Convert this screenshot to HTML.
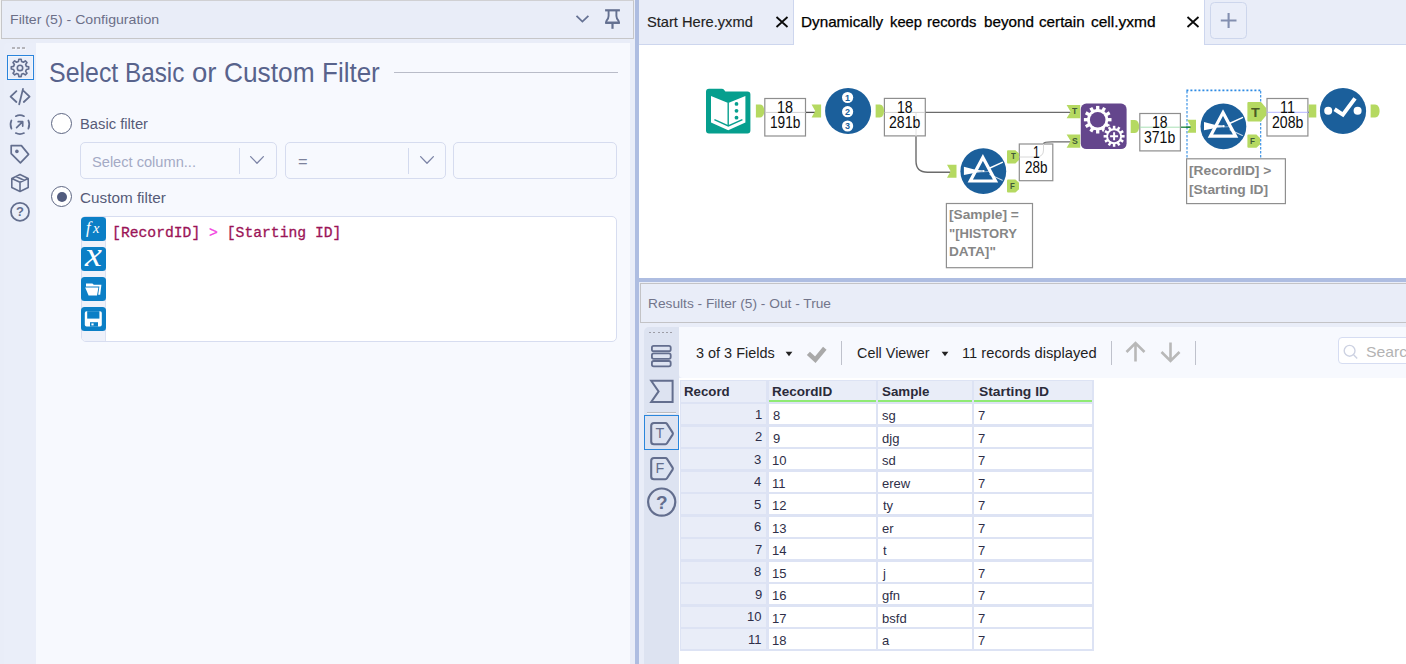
<!DOCTYPE html>
<html><head><meta charset="utf-8"><title>Alteryx Designer</title>
<style>
html,body{margin:0;padding:0;}
body{width:1406px;height:664px;overflow:hidden;background:#fff;font-family:"Liberation Sans",sans-serif;}
#root{position:relative;width:1406px;height:664px;overflow:hidden;background:#e9edf8;}
#root div,#root svg{position:absolute;box-sizing:border-box;}
.t{position:absolute;white-space:pre;line-height:1;transform-origin:0 0;display:block;}
.box{background:#fff;border:1px solid #8c8c8c;}
.anno{background:#fff;border:1px solid #8c8c8c;}
.dd{background:#f7f9fe;border:1px solid #d6dcef;border-radius:5px;}
.cell{background:#fff;}

</style></head>
<body>
<div id="root">
<div style="left:0;top:0;width:1.2px;height:40px;background:#f3f3f3"></div>
<div style="left:1.2px;top:-0.2px;width:632.5px;height:39.1px;background:#e9edf8;border:1.1px solid #c6c6c8;border-top-color:#d0d0d3"></div>
<div style="left:4px;top:43px;width:32px;height:621px;background:#eaeef9;border-radius:4px 0 0 0"></div>
<div style="left:36px;top:43px;width:594px;height:621px;background:#f7f9fe"></div>
<div style="left:393.5px;top:71.5px;width:224px;height:1px;background:#b9bcc8"></div>
<div style="left:51.3px;top:112.8px;width:21px;height:21px;border-radius:50%;border:1.5px solid #5d6682;background:#fff"></div>
<div style="left:51.3px;top:186.3px;width:21px;height:21px;border-radius:50%;border:1.5px solid #5d6682;background:#fff"></div>
<div style="left:56.6px;top:191.6px;width:10.4px;height:10.4px;border-radius:50%;background:#525c7e"></div>
<div class="dd" style="left:80px;top:142px;width:197.2px;height:36.6px"></div>
<div style="left:239px;top:147.5px;width:1px;height:26px;background:#d3daee"></div>
<div class="dd" style="left:285.2px;top:142px;width:160.8px;height:36.6px"></div>
<div style="left:407.5px;top:147.5px;width:1px;height:26px;background:#d3daee"></div>
<div class="dd" style="left:452.6px;top:142px;width:164.2px;height:36.6px"></div>
<svg style="left:249.3px;top:153px;width:16px;height:14px" viewBox="0 0 16 14"><path d="M1.6 3.6 L8 10.2 L14.4 3.6" fill="none" stroke="#7c84a6" stroke-width="1.3" stroke-linecap="round" stroke-linejoin="round"/></svg>
<svg style="left:419px;top:153px;width:16px;height:14px" viewBox="0 0 16 14"><path d="M1.6 3.6 L8 10.2 L14.4 3.6" fill="none" stroke="#7c84a6" stroke-width="1.3" stroke-linecap="round" stroke-linejoin="round"/></svg>
<div style="left:80.5px;top:215.7px;width:536.5px;height:126.5px;background:#fff;border:1px solid #d7ddf0;border-radius:5px"></div>
<div style="left:81.5px;top:216.7px;width:24.5px;height:124.5px;background:#eef1fa;border-radius:4px 0 0 4px;border-right:1px solid #dde2f2"></div>
<div style="left:81.3px;top:217px;width:25px;height:23.6px;background:#0b7fc6;border-radius:3.5px"></div>
<div style="left:81.3px;top:247px;width:25px;height:23.6px;background:#0b7fc6;border-radius:3.5px"></div>
<div style="left:81.3px;top:277px;width:25px;height:23.6px;background:#0b7fc6;border-radius:3.5px"></div>
<div style="left:81.3px;top:307px;width:25px;height:23.6px;background:#0b7fc6;border-radius:3.5px"></div>
<div style="left:635px;top:0;width:4px;height:664px;background:#aebde1"></div>
<div style="left:639px;top:0;width:767px;height:45px;background:#e9edf8;border-bottom:1px solid #cdd6ee"></div>
<div style="left:793px;top:0;width:411.8px;height:45px;background:#fff;border-left:1px solid #cdd6ee;border-right:1px solid #cdd6ee"></div>
<div style="left:1210.2px;top:2.2px;width:36.8px;height:36.5px;background:#eaeef9;border:1.2px solid #cdd6ec;border-radius:4.5px"></div>
<svg style="left:1218px;top:10px;width:22px;height:22px" viewBox="1218 10 22 22"><path d="M1228.6 12.9V28.1M1220.8 20.5H1236.5" stroke="#838fb0" stroke-width="2.1" fill="none"/></svg>
<svg style="left:775px;top:14.7px;width:14px;height:14px" viewBox="0 0 14 14"><path d="M1.5 2L12.5 12M12.5 2L1.5 12" stroke="#0a0a0a" stroke-width="1.8" fill="none"/></svg>
<svg style="left:1186.1px;top:14.7px;width:14px;height:14px" viewBox="0 0 14 14"><path d="M1.5 2L12.5 12M12.5 2L1.5 12" stroke="#0a0a0a" stroke-width="1.8" fill="none"/></svg>
<div style="left:639px;top:45px;width:767px;height:233px;background:#fff"></div>
<svg style="left:639px;top:45px;width:767px;height:233px" viewBox="639 45 767 233"><rect x="764.8" y="98.5" width="40.700000000000045" height="37.5" fill="#fff" stroke="#8e8e8e" stroke-width="1.2"/>
<rect x="884.4" y="98.4" width="40.89999999999998" height="37.5" fill="#fff" stroke="#8e8e8e" stroke-width="1.2"/>
<rect x="1019.3" y="144.0" width="33.5" height="36.69999999999999" fill="#fff" stroke="#8e8e8e" stroke-width="1.2"/>
<rect x="1139.8" y="113.5" width="40.600000000000136" height="37.400000000000006" fill="#fff" stroke="#8e8e8e" stroke-width="1.2"/>
<rect x="1267.0" y="98.5" width="40.90000000000009" height="37.5" fill="#fff" stroke="#8e8e8e" stroke-width="1.2"/>
<path d="M765 112.4H805.5" stroke="#cfcfcf" stroke-width="1"/>
<path d="M884.5 112.4H925" stroke="#cfcfcf" stroke-width="1"/>
<path d="M916 113V136" stroke="#e2e2e2" stroke-width="1"/>
<path d="M1019.5 157H1036Q1043.5 157 1043.5 150V144" stroke="#d8d8d8" stroke-width="1" fill="none"/>
<path d="M1140 127.2H1180.4" stroke="#a9dfb4" stroke-width="1"/>
<path d="M1267 112.3H1308" stroke="#b4b4ff" stroke-width="1"/>
<path d="M806 112.4H815.5" stroke="#4f4f4f" stroke-width="1.3"/>
<path d="M925.8 112.4H1070.6" stroke="#6b6b6b" stroke-width="1.4"/>
<path d="M916 136.5V161Q916 172.2 927.5 172.2H950.8" stroke="#6b6b6b" stroke-width="1.4" fill="none"/>
<path d="M1043.5 143.5Q1044 141.9 1052 141.9H1070.6" stroke="#6b6b6b" stroke-width="1.4" fill="none"/>
<path d="M1180.9 127.2H1191" stroke="#16843a" stroke-width="1.3"/>
<path d="M1308.4 112.3H1311.6" stroke="#1a1ac8" stroke-width="1.3"/>
<path d="M709 88.8H721.6Q723.4 88.8 724.4 90.2L725.4 91.6H747.4Q750.4 91.6 750.4 94.6V130.6Q750.4 133.6 747.4 133.6H709Q706 133.6 706 130.6V91.8Q706 88.8 709 88.8Z" fill="#069f8e"/>
<path d="M711 96L728.2 103L745.4 96V122.4L728.2 130.2L711 122.4Z" fill="#fff"/>
<path d="M728.2 102.5V126" stroke="#069f8e" stroke-width="1.4"/>
<path d="M714.4 119.6L728.3 125.9L742.4 119.6" stroke="#069f8e" stroke-width="1.4" fill="none"/>
<circle cx="736.5" cy="103.9" r="1.9" fill="#069f8e"/>
<circle cx="736.5" cy="110.8" r="1.9" fill="#069f8e"/>
<circle cx="736.5" cy="117.7" r="1.9" fill="#069f8e"/>
<path d="M755.9 104.5H760.10C762.62 104.5 764.30 107.36 764.30 111.00C764.30 114.64 762.62 117.5 760.10 117.5H755.9Z" fill="#b5d961"/>
<path d="M811.6 104.5H821.1V117.5H811.6L815.2 111.0Z" fill="#b5d961"/>
<circle cx="848.1" cy="111" r="23" fill="#1b5f9b"/>
<circle cx="847.6" cy="97.5" r="5.6" fill="#fff"/>
<text x="847.6" y="100.7" font-size="9" font-weight="700" text-anchor="middle" fill="#1b5f9b" font-family="Liberation Sans, sans-serif">1</text>
<circle cx="847.6" cy="111.7" r="5.6" fill="#fff"/>
<text x="847.6" y="114.9" font-size="9" font-weight="700" text-anchor="middle" fill="#1b5f9b" font-family="Liberation Sans, sans-serif">2</text>
<circle cx="847.6" cy="126.0" r="5.6" fill="#fff"/>
<text x="847.6" y="129.2" font-size="9" font-weight="700" text-anchor="middle" fill="#1b5f9b" font-family="Liberation Sans, sans-serif">3</text>
<path d="M875.6 104.5H879.80C882.32 104.5 884.00 107.36 884.00 111.00C884.00 114.64 882.32 117.5 879.80 117.5H875.6Z" fill="#b5d961"/>
<path d="M947 164.8H956.5V177.8H947L950.6 171.3Z" fill="#b5d961"/>
<circle cx="983.3" cy="171.2" r="22.9" fill="#1b5f9b"/><path d="M963.90 166.80L963.90 175.00L975.40 172.70L983.30 171.50L983.30 170.40L975.40 169.80Z" fill="#fff"/><path d="M989.40 168.30L1002.30 162.40" stroke="#fff" stroke-width="1.5" stroke-linecap="round"/><path d="M974.90 172.40L989.90 171.40" stroke="#8fb0cf" stroke-width="0.9"/><path d="M989.90 174.60L1002.30 180.20" stroke="#c5d7e8" stroke-width="1.1" stroke-linecap="round"/><path d="M982.90 157.40L995.50 181.00L970.30 181.00Z" fill="none" stroke="#fff" stroke-width="3.2" stroke-linejoin="miter"/><circle cx="983.50" cy="171.00" r="1.1" fill="#fff"/>
<path d="M1008 150.2H1015.4L1019 153.6V159.99999999999997L1015.4 163.39999999999998H1008Q1007 163.39999999999998 1007 162.39999999999998V151.2Q1007 150.2 1008 150.2Z" fill="#b5d961"/>
<path d="M1008 179.4H1015.4L1019 182.8V189.2L1015.4 192.6H1008Q1007 192.6 1007 191.6V180.4Q1007 179.4 1008 179.4Z" fill="#b5d961"/>
<path d="M1066.6 105.1H1080.1999999999998V118.3H1066.6L1070.6 111.69999999999999Z" fill="#b5d961"/>
<path d="M1066.6 134.5H1080.1999999999998V147.7H1066.6L1070.6 141.1Z" fill="#b5d961"/>
<rect x="1080.8" y="103.6" width="45.8" height="45.5" rx="5.5" fill="#64468c"/>
<circle cx="1097.7" cy="119.7" r="10.6" fill="#fff"/><rect x="1096.05" y="105.90" width="3.3" height="4.70" fill="#fff" transform="rotate(0.00 1097.7 119.7)"/><rect x="1096.05" y="105.90" width="3.3" height="4.70" fill="#fff" transform="rotate(30.00 1097.7 119.7)"/><rect x="1096.05" y="105.90" width="3.3" height="4.70" fill="#fff" transform="rotate(60.00 1097.7 119.7)"/><rect x="1096.05" y="105.90" width="3.3" height="4.70" fill="#fff" transform="rotate(90.00 1097.7 119.7)"/><rect x="1096.05" y="105.90" width="3.3" height="4.70" fill="#fff" transform="rotate(120.00 1097.7 119.7)"/><rect x="1096.05" y="105.90" width="3.3" height="4.70" fill="#fff" transform="rotate(150.00 1097.7 119.7)"/><rect x="1096.05" y="105.90" width="3.3" height="4.70" fill="#fff" transform="rotate(180.00 1097.7 119.7)"/><rect x="1096.05" y="105.90" width="3.3" height="4.70" fill="#fff" transform="rotate(210.00 1097.7 119.7)"/><rect x="1096.05" y="105.90" width="3.3" height="4.70" fill="#fff" transform="rotate(240.00 1097.7 119.7)"/><rect x="1096.05" y="105.90" width="3.3" height="4.70" fill="#fff" transform="rotate(270.00 1097.7 119.7)"/><rect x="1096.05" y="105.90" width="3.3" height="4.70" fill="#fff" transform="rotate(300.00 1097.7 119.7)"/><rect x="1096.05" y="105.90" width="3.3" height="4.70" fill="#fff" transform="rotate(330.00 1097.7 119.7)"/><circle cx="1097.7" cy="119.7" r="7.8" fill="#64468c"/>
<circle cx="1114.1" cy="136.3" r="11.6" fill="#64468c"/>
<circle cx="1114.1" cy="136.3" r="8.0" fill="#fff"/><rect x="1112.85" y="125.80" width="2.5" height="4.00" fill="#fff" transform="rotate(0.00 1114.1 136.3)"/><rect x="1112.85" y="125.80" width="2.5" height="4.00" fill="#fff" transform="rotate(30.00 1114.1 136.3)"/><rect x="1112.85" y="125.80" width="2.5" height="4.00" fill="#fff" transform="rotate(60.00 1114.1 136.3)"/><rect x="1112.85" y="125.80" width="2.5" height="4.00" fill="#fff" transform="rotate(90.00 1114.1 136.3)"/><rect x="1112.85" y="125.80" width="2.5" height="4.00" fill="#fff" transform="rotate(120.00 1114.1 136.3)"/><rect x="1112.85" y="125.80" width="2.5" height="4.00" fill="#fff" transform="rotate(150.00 1114.1 136.3)"/><rect x="1112.85" y="125.80" width="2.5" height="4.00" fill="#fff" transform="rotate(180.00 1114.1 136.3)"/><rect x="1112.85" y="125.80" width="2.5" height="4.00" fill="#fff" transform="rotate(210.00 1114.1 136.3)"/><rect x="1112.85" y="125.80" width="2.5" height="4.00" fill="#fff" transform="rotate(240.00 1114.1 136.3)"/><rect x="1112.85" y="125.80" width="2.5" height="4.00" fill="#fff" transform="rotate(270.00 1114.1 136.3)"/><rect x="1112.85" y="125.80" width="2.5" height="4.00" fill="#fff" transform="rotate(300.00 1114.1 136.3)"/><rect x="1112.85" y="125.80" width="2.5" height="4.00" fill="#fff" transform="rotate(330.00 1114.1 136.3)"/><circle cx="1114.1" cy="136.3" r="6.0" fill="#64468c"/>
<path d="M1114.1 132.3V140.3M1110.1 136.3H1118.1" stroke="#fff" stroke-width="2"/>
<path d="M1130.7 120H1134.90C1137.42 120 1139.10 122.86 1139.10 126.50C1139.10 130.14 1137.42 133 1134.90 133H1130.7Z" fill="#b5d961"/>
<path d="M1186.4 90.4H1261.2" fill="none" stroke="#2d8ae3" stroke-width="1.7" stroke-dasharray="2 2"/>
<path d="M1187 91V158.6M1260.7 91V158.6" fill="none" stroke="#2d8ae3" stroke-width="1.1" stroke-dasharray="2.6 1.4"/>
<path d="M1187.2 119.7H1196.0V132.7H1187.2L1190.8 126.2Z" fill="#b5d961"/>
<path d="M1186 127.2H1190.6" stroke="#16843a" stroke-width="1.3"/>
<circle cx="1223.4" cy="126.4" r="22.9" fill="#1b5f9b"/><path d="M1204.00 122.00L1204.00 130.20L1215.50 127.90L1223.40 126.70L1223.40 125.60L1215.50 125.00Z" fill="#fff"/><path d="M1229.50 123.50L1242.40 117.60" stroke="#fff" stroke-width="1.5" stroke-linecap="round"/><path d="M1215.00 127.60L1230.00 126.60" stroke="#8fb0cf" stroke-width="0.9"/><path d="M1230.00 129.80L1242.40 135.40" stroke="#c5d7e8" stroke-width="1.1" stroke-linecap="round"/><path d="M1223.00 112.60L1235.60 136.20L1210.40 136.20Z" fill="none" stroke="#fff" stroke-width="3.2" stroke-linejoin="miter"/><circle cx="1223.60" cy="126.20" r="1.1" fill="#fff"/>
<path d="M1248.4 102.1H1261L1266.2 108V115.6L1261 121.5H1248.4Q1247.4 121.5 1247.4 120.5V103.1Q1247.4 102.1 1248.4 102.1Z" fill="#b5d961"/>
<path d="M1248.4 134.6H1256.4L1260.0 138.0V144.39999999999998L1256.4 147.79999999999998H1248.4Q1247.4 147.79999999999998 1247.4 146.79999999999998V135.6Q1247.4 134.6 1248.4 134.6Z" fill="#b5d961"/>
<path d="M1308.7 104.5H1316.3V117.5H1308.7L1308.7 111.0Z" fill="#b5d961"/>
<circle cx="1343" cy="111" r="23.1" fill="#1b5f9b"/>
<circle cx="1328.2" cy="110.8" r="4" fill="#fff"/><circle cx="1357.6" cy="110.8" r="4" fill="#fff"/>
<path d="M1334.6 109.2L1342.9 114.6L1355.0 98.4" stroke="#fff" stroke-width="4" fill="none" stroke-linejoin="miter"/>
<path d="M1370.6 104.5H1375.10C1377.80 104.5 1379.60 107.36 1379.60 111.00C1379.60 114.64 1377.80 117.5 1375.10 117.5H1370.6Z" fill="#b5d961"/>
<rect x="946.4" y="203.5" width="86.1" height="64.2" fill="#fff" stroke="#8f8f8f" stroke-width="1.2"/>
<rect x="1186.6" y="158.8" width="98.8" height="44.8" fill="#fff" stroke="#8f8f8f" stroke-width="1.2"/></svg>
<div style="left:639px;top:278px;width:767px;height:4px;background:#aebde1"></div>
<div style="left:640px;top:282.5px;width:770px;height:40px;background:#e9edf8;border:1px solid #c3c3c6"></div>
<div style="left:644px;top:327px;width:35px;height:340px;background:#dde3f1;border-radius:5px 0 0 0"></div>
<div style="left:679px;top:327px;width:727px;height:51px;background:#f7f9fe;border-radius:0 0 0 4px"></div>
<div style="left:679px;top:378px;width:727px;height:286px;background:#fff"></div>
<div style="left:841.0px;top:340.5px;width:1px;height:24px;background:#bfc2cc"></div>
<div style="left:1110.8px;top:340.5px;width:1px;height:24px;background:#bfc2cc"></div>
<div style="left:1194.8px;top:340.5px;width:1px;height:24px;background:#bfc2cc"></div>
<svg style="left:785.3px;top:350.5px;width:8px;height:6px" viewBox="0 0 8 6"><path d="M0.6 0.8H7.4L4 5.2Z" fill="#222"/></svg>
<svg style="left:941px;top:350.5px;width:8px;height:6px" viewBox="0 0 8 6"><path d="M0.6 0.8H7.4L4 5.2Z" fill="#222"/></svg>
<svg style="left:803px;top:342px;width:28px;height:24px" viewBox="803 342 28 24"><path d="M808.4 353.4L815.3 359.6L824.8 348.2" fill="none" stroke="#a9a9a9" stroke-width="4.6" stroke-linejoin="miter"/></svg>
<svg style="left:1123.5px;top:341px;width:23px;height:22px" viewBox="0 0 23 22"><path d="M11.5 20.5V2.5M2.5 11L11.5 2L20.5 11" fill="none" stroke="#b8b8b8" stroke-width="2.6"/></svg>
<svg style="left:1158.5px;top:341px;width:23px;height:22px" viewBox="0 0 23 22"><path d="M11.5 1.5V19.5M2.5 11L11.5 20L20.5 11" fill="none" stroke="#b8b8b8" stroke-width="2.6"/></svg>
<div style="left:1338px;top:337.3px;width:80px;height:26.6px;background:#fff;border:1px solid #d6ddf2;border-radius:4px"></div>
<svg style="left:1342px;top:343px;width:18px;height:18px" viewBox="0 0 18 18"><circle cx="7.6" cy="7.8" r="5.4" fill="none" stroke="#cdd2e2" stroke-width="1.4"/><path d="M11.6 11.8L15.2 15.4" stroke="#cdd2e2" stroke-width="1.4"/></svg>
<div style="left:680.2px;top:380.2px;width:414.0px;height:270.7px;background:#dde3f4"></div>
<div style="left:680.8000000000001px;top:381.2px;width:85.59999999999991px;height:20.8px;background:#e9edf8"></div>
<div style="left:768.8000000000001px;top:381.2px;width:107.19999999999993px;height:20.8px;background:#e9edf8"></div>
<div style="left:768.8000000000001px;top:399.6px;width:107.19999999999993px;height:2.4px;background:#90ea74"></div>
<div style="left:878.4000000000001px;top:381.2px;width:93.39999999999986px;height:20.8px;background:#e9edf8"></div>
<div style="left:878.4000000000001px;top:399.6px;width:93.39999999999986px;height:2.4px;background:#90ea74"></div>
<div style="left:974.2px;top:381.2px;width:117.59999999999991px;height:20.8px;background:#e9edf8"></div>
<div style="left:974.2px;top:399.6px;width:117.59999999999991px;height:2.4px;background:#90ea74"></div>
<div style="left:680.8000000000001px;top:404.30px;width:85.59999999999991px;height:20px;background:#e9edf8"></div>
<div style="left:768.8000000000001px;top:404.30px;width:107.19999999999993px;height:20px;background:#fff"></div>
<div style="left:878.4000000000001px;top:404.30px;width:93.39999999999986px;height:20px;background:#fff"></div>
<div style="left:974.2px;top:404.30px;width:117.59999999999991px;height:20px;background:#fff"></div>
<div style="left:680.8000000000001px;top:426.80px;width:85.59999999999991px;height:20px;background:#e9edf8"></div>
<div style="left:768.8000000000001px;top:426.80px;width:107.19999999999993px;height:20px;background:#fff"></div>
<div style="left:878.4000000000001px;top:426.80px;width:93.39999999999986px;height:20px;background:#fff"></div>
<div style="left:974.2px;top:426.80px;width:117.59999999999991px;height:20px;background:#fff"></div>
<div style="left:680.8000000000001px;top:449.30px;width:85.59999999999991px;height:20px;background:#e9edf8"></div>
<div style="left:768.8000000000001px;top:449.30px;width:107.19999999999993px;height:20px;background:#fff"></div>
<div style="left:878.4000000000001px;top:449.30px;width:93.39999999999986px;height:20px;background:#fff"></div>
<div style="left:974.2px;top:449.30px;width:117.59999999999991px;height:20px;background:#fff"></div>
<div style="left:680.8000000000001px;top:471.80px;width:85.59999999999991px;height:20px;background:#e9edf8"></div>
<div style="left:768.8000000000001px;top:471.80px;width:107.19999999999993px;height:20px;background:#fff"></div>
<div style="left:878.4000000000001px;top:471.80px;width:93.39999999999986px;height:20px;background:#fff"></div>
<div style="left:974.2px;top:471.80px;width:117.59999999999991px;height:20px;background:#fff"></div>
<div style="left:680.8000000000001px;top:494.30px;width:85.59999999999991px;height:20px;background:#e9edf8"></div>
<div style="left:768.8000000000001px;top:494.30px;width:107.19999999999993px;height:20px;background:#fff"></div>
<div style="left:878.4000000000001px;top:494.30px;width:93.39999999999986px;height:20px;background:#fff"></div>
<div style="left:974.2px;top:494.30px;width:117.59999999999991px;height:20px;background:#fff"></div>
<div style="left:680.8000000000001px;top:516.80px;width:85.59999999999991px;height:20px;background:#e9edf8"></div>
<div style="left:768.8000000000001px;top:516.80px;width:107.19999999999993px;height:20px;background:#fff"></div>
<div style="left:878.4000000000001px;top:516.80px;width:93.39999999999986px;height:20px;background:#fff"></div>
<div style="left:974.2px;top:516.80px;width:117.59999999999991px;height:20px;background:#fff"></div>
<div style="left:680.8000000000001px;top:539.30px;width:85.59999999999991px;height:20px;background:#e9edf8"></div>
<div style="left:768.8000000000001px;top:539.30px;width:107.19999999999993px;height:20px;background:#fff"></div>
<div style="left:878.4000000000001px;top:539.30px;width:93.39999999999986px;height:20px;background:#fff"></div>
<div style="left:974.2px;top:539.30px;width:117.59999999999991px;height:20px;background:#fff"></div>
<div style="left:680.8000000000001px;top:561.80px;width:85.59999999999991px;height:20px;background:#e9edf8"></div>
<div style="left:768.8000000000001px;top:561.80px;width:107.19999999999993px;height:20px;background:#fff"></div>
<div style="left:878.4000000000001px;top:561.80px;width:93.39999999999986px;height:20px;background:#fff"></div>
<div style="left:974.2px;top:561.80px;width:117.59999999999991px;height:20px;background:#fff"></div>
<div style="left:680.8000000000001px;top:584.30px;width:85.59999999999991px;height:20px;background:#e9edf8"></div>
<div style="left:768.8000000000001px;top:584.30px;width:107.19999999999993px;height:20px;background:#fff"></div>
<div style="left:878.4000000000001px;top:584.30px;width:93.39999999999986px;height:20px;background:#fff"></div>
<div style="left:974.2px;top:584.30px;width:117.59999999999991px;height:20px;background:#fff"></div>
<div style="left:680.8000000000001px;top:606.80px;width:85.59999999999991px;height:20px;background:#e9edf8"></div>
<div style="left:768.8000000000001px;top:606.80px;width:107.19999999999993px;height:20px;background:#fff"></div>
<div style="left:878.4000000000001px;top:606.80px;width:93.39999999999986px;height:20px;background:#fff"></div>
<div style="left:974.2px;top:606.80px;width:117.59999999999991px;height:20px;background:#fff"></div>
<div style="left:680.8000000000001px;top:629.30px;width:85.59999999999991px;height:20px;background:#e9edf8"></div>
<div style="left:768.8000000000001px;top:629.30px;width:107.19999999999993px;height:20px;background:#fff"></div>
<div style="left:878.4000000000001px;top:629.30px;width:93.39999999999986px;height:20px;background:#fff"></div>
<div style="left:974.2px;top:629.30px;width:117.59999999999991px;height:20px;background:#fff"></div>
<svg style="left:570px;top:8px;width:26px;height:22px" viewBox="570 8 26 22"><path d="M576.5 15.9L582.4 21.6L588.4 15.9" fill="none" stroke="#667294" stroke-width="1.8" stroke-linejoin="miter"/></svg>
<svg style="left:600px;top:4px;width:26px;height:30px" viewBox="600 4 26 30"><path d="M605.1 10.3H619.9" stroke="#647090" stroke-width="2.2"/><path d="M608.6 11V16Q608.6 18.2 606.6 20.6L606 22.7H619L618.4 20.6Q616.4 18.2 616.4 16V11" fill="none" stroke="#647090" stroke-width="1.9" stroke-linejoin="round"/><path d="M605.2 22.8H619.8" stroke="#647090" stroke-width="2.2"/><path d="M612.5 23.4V28.8" stroke="#647090" stroke-width="2.2"/></svg>
<div style="left:12.3px;top:46.8px;width:2.7px;height:2.2px;background:#b4b4ba;box-shadow:0.8px 0.8px 0 #f6f8fd"></div>
<div style="left:17.3px;top:46.8px;width:2.7px;height:2.2px;background:#b4b4ba;box-shadow:0.8px 0.8px 0 #f6f8fd"></div>
<div style="left:22.3px;top:46.8px;width:2.7px;height:2.2px;background:#b4b4ba;box-shadow:0.8px 0.8px 0 #f6f8fd"></div>
<div style="left:7.2px;top:55.2px;width:26.7px;height:25px;border:1.9px solid #2a84dc;box-shadow:inset 0 0 0 0.8px #f4f7fd"></div>
<svg style="left:8px;top:56px;width:24px;height:24px" viewBox="8 56 24 24"><path d="M18.46 61.48L18.83 59.18L21.17 59.18L21.54 61.48L23.45 62.27L25.34 60.90L27.00 62.56L25.63 64.45L26.42 66.36L28.72 66.73L28.72 69.07L26.42 69.44L25.63 71.35L27.00 73.24L25.34 74.90L23.45 73.53L21.54 74.32L21.17 76.62L18.83 76.62L18.46 74.32L16.55 73.53L14.66 74.90L13.00 73.24L14.37 71.35L13.58 69.44L11.28 69.07L11.28 66.73L13.58 66.36L14.37 64.45L13.00 62.56L14.66 60.90L16.55 62.27Z" fill="none" stroke="#636e8e" stroke-width="1.6" stroke-linejoin="round"/><circle cx="20" cy="67.9" r="2.7" fill="none" stroke="#636e8e" stroke-width="1.6"/></svg>
<svg style="left:8px;top:86px;width:24px;height:22px" viewBox="8 86 24 22"><path d="M16.4 91.2L10.6 96.6L16.4 102M23.8 91.2L29.6 96.6L23.8 102M23 88.9L19.2 104.3" fill="none" stroke="#636e8e" stroke-width="1.8" stroke-linecap="round" stroke-linejoin="round"/></svg>
<svg style="left:8px;top:112px;width:24px;height:25px" viewBox="8 112 24 25"><path d="M15.78 116.15A9.4 9.4 0 0 1 24.02 116.15M28.35 120.48A9.4 9.4 0 0 1 28.35 128.72M24.02 133.05A9.4 9.4 0 0 1 15.78 133.05M11.45 128.72A9.4 9.4 0 0 1 11.45 120.48" fill="none" stroke="#636e8e" stroke-width="1.7" stroke-linecap="round"/><path d="M16.6 127.6L22.4 121.9M18.2 121.7H22.7V126.1" fill="none" stroke="#636e8e" stroke-width="1.7" stroke-linecap="round" stroke-linejoin="round"/></svg>
<svg style="left:8px;top:142px;width:24px;height:24px" viewBox="8 142 24 24"><path d="M11.2 145.6H21.4L28.6 154.4L20.4 162.8L11.2 153.6Z" fill="none" stroke="#636e8e" stroke-width="1.7" stroke-linejoin="round"/><circle cx="16.9" cy="151.4" r="1.8" fill="#636e8e"/></svg>
<svg style="left:8px;top:171px;width:24px;height:24px" viewBox="8 171 24 24"><path d="M20 174.6L28.2 178.4V187.6L20 191.4L11.8 187.6V178.4ZM11.8 178.4L20 182.2L28.2 178.4M20 182.2V191.4M15.9 176.5L24.1 180.3" fill="none" stroke="#636e8e" stroke-width="1.6" stroke-linejoin="round"/></svg>
<svg style="left:8px;top:200px;width:24px;height:24px" viewBox="8 200 24 24"><circle cx="20" cy="211.8" r="9" fill="none" stroke="#636e8e" stroke-width="1.8"/><text x="20" y="216.4" font-size="13" font-weight="700" text-anchor="middle" fill="#636e8e" font-family="Liberation Sans, sans-serif">?</text></svg>
<svg style="left:81.3px;top:217px;width:25px;height:24px" viewBox="0 0 25 24"><text x="5" y="16" font-size="16.5" font-style="italic" fill="#fff" font-family="Liberation Serif, serif">f</text><text x="12" y="16" font-size="14.5" font-style="italic" fill="#fff" font-family="Liberation Serif, serif">x</text></svg>
<svg style="left:81.3px;top:247px;width:25px;height:24px" viewBox="0 0 25 24"><text x="12.4" y="19.4" font-size="34" font-style="italic" text-anchor="middle" fill="#fff" font-family="Liberation Serif, serif" transform="translate(12.4 0) scale(1.12 1) translate(-12.4 0)">x</text></svg>
<svg style="left:81.3px;top:277px;width:25px;height:24px" viewBox="0 0 25 24"><path d="M5 6.4H11.4L12.8 7.8H20.4L19.2 17.8H17.2L18.4 9.4H5Z" fill="#fff"/><path d="M4.2 10.6H17.4L16 18.4H7.6Z" fill="#fff"/></svg>
<svg style="left:81.3px;top:307px;width:25px;height:24px" viewBox="0 0 25 24"><path d="M5.6 4.2H19Q20.8 4.2 20.8 6V17.8Q20.8 19.6 19 19.6H5.6Q3.8 19.6 3.8 17.8V6Q3.8 4.2 5.6 4.2Z" fill="#fff"/><rect x="6.2" y="4.2" width="12.2" height="7.4" fill="#0b7fc6"/><rect x="9" y="15.2" width="8" height="4.4" fill="#0b7fc6"/><rect x="10.4" y="16.4" width="2.2" height="2" fill="#fff"/></svg>
<div style="left:649.2px;top:331.6px;width:2px;height:1.4px;background:#9d9da6"></div>
<div style="left:653.4px;top:331.6px;width:2px;height:1.4px;background:#9d9da6"></div>
<div style="left:657.6px;top:331.6px;width:2px;height:1.4px;background:#9d9da6"></div>
<div style="left:661.8px;top:331.6px;width:2px;height:1.4px;background:#9d9da6"></div>
<div style="left:666.0px;top:331.6px;width:2px;height:1.4px;background:#9d9da6"></div>
<div style="left:670.2px;top:331.6px;width:2px;height:1.4px;background:#9d9da6"></div>
<svg style="left:648px;top:342px;width:28px;height:28px" viewBox="648 342 28 28"><rect x="651.9" y="345.8" width="18.8" height="5.4" rx="1.8" fill="none" stroke="#636e8e" stroke-width="1.8"/><rect x="651.9" y="353.4" width="18.8" height="5.4" rx="1.8" fill="none" stroke="#636e8e" stroke-width="1.8"/><rect x="651.9" y="361.0" width="18.8" height="5.4" rx="1.8" fill="none" stroke="#636e8e" stroke-width="1.8"/></svg>
<svg style="left:646px;top:377px;width:32px;height:30px" viewBox="646 377 32 30"><path d="M651.2 380.8H672.6V402H651.2L658.6 391.4Z" fill="none" stroke="#636e8e" stroke-width="2" stroke-linejoin="miter"/></svg>
<div style="left:646.5px;top:411.9px;width:29.5px;height:1px;background:#bcbcc0;box-shadow:0 1px 0 #f4f6fc"></div>
<div style="left:644px;top:415.2px;width:35px;height:35.1px;border:1.7px solid #2a86dc"></div>
<svg style="left:646px;top:419.8px;width:32px;height:28px" viewBox="646 419.8 32 28"><path d="M654 422.8H665.4Q666.4 422.8 667 423.7L672.6 432.40000000000003Q673.2 433.40000000000003 672.6 434.40000000000003L667 443.1Q666.4 444.0 665.4 444.0H654Q651.2 444.0 651.2 441.2V425.6Q651.2 422.8 654 422.8Z" fill="none" stroke="#636e8e" stroke-width="2.1" stroke-linejoin="round"/><text x="659.9" y="437.90000000000003" font-size="14.4" text-anchor="middle" fill="#636e8e" font-family="Liberation Sans, sans-serif">T</text></svg>
<svg style="left:646px;top:454.6px;width:32px;height:28px" viewBox="646 454.6 32 28"><path d="M654 457.6H665.4Q666.4 457.6 667 458.5L672.6 467.20000000000005Q673.2 468.20000000000005 672.6 469.20000000000005L667 477.90000000000003Q666.4 478.8 665.4 478.8H654Q651.2 478.8 651.2 476.0V460.40000000000003Q651.2 457.6 654 457.6Z" fill="none" stroke="#636e8e" stroke-width="2.1" stroke-linejoin="round"/><text x="659.9" y="472.70000000000005" font-size="14.4" text-anchor="middle" fill="#636e8e" font-family="Liberation Sans, sans-serif">F</text></svg>
<svg style="left:645px;top:485px;width:34px;height:34px" viewBox="645 485 34 34"><circle cx="661.7" cy="502.1" r="13.6" fill="none" stroke="#636e8e" stroke-width="2.2"/><text x="661.7" y="509" font-size="19" font-weight="700" text-anchor="middle" fill="#636e8e" font-family="Liberation Sans, sans-serif">?</text></svg>
<span class="t" style='left:10.21px;top:13.20px;font-size:13px;color:#6c6f88;transform:scaleX(1.0868);'>Filter (5) - Configuration</span>
<span class="t" style='left:48.82px;top:58.72px;font-size:27.5px;color:#58638c;transform:scaleX(0.9066);'>Select</span>
<span class="t" style='left:125.30px;top:58.72px;font-size:27.5px;color:#58638c;transform:scaleX(0.8830);'>Basic</span>
<span class="t" style='left:192.44px;top:58.72px;font-size:27.5px;color:#58638c;transform:scaleX(1.0018);'>or</span>
<span class="t" style='left:224.07px;top:58.72px;font-size:27.5px;color:#58638c;transform:scaleX(0.9562);'>Custom</span>
<span class="t" style='left:321.77px;top:58.72px;font-size:27.5px;color:#58638c;transform:scaleX(0.9451);'>Filter</span>
<span class="t" style='left:79.54px;top:117.15px;font-size:14px;color:#565b78;transform:scaleX(1.0535);'>Basic filter</span>
<span class="t" style='left:92.27px;top:154.65px;font-size:14px;color:#a4aac5;transform:scaleX(1.0439);'>Select column...</span>
<span class="t" style='left:298.00px;top:154.65px;font-size:14px;color:#7d829c;transform:scaleX(1.1739);'>=</span>
<span class="t" style='left:79.64px;top:190.85px;font-size:14px;color:#565b78;transform:scaleX(1.0912);'>Custom filter</span>
<span class="t" style='left:112.10px;top:225.53px;font-size:14.7px;color:#9b1457;font-family:"Liberation Mono", monospace;-webkit-text-stroke:0.3px #9b1457;transform:scaleX(1.0000);'>[RecordID]</span>
<span class="t" style='left:209.10px;top:225.53px;font-size:14.7px;color:#f23fe0;font-family:"Liberation Mono", monospace;-webkit-text-stroke:0.3px #f23fe0;transform:scaleX(1.0000);'>&gt;</span>
<span class="t" style='left:226.80px;top:225.53px;font-size:14.7px;color:#9b1457;font-family:"Liberation Mono", monospace;-webkit-text-stroke:0.3px #9b1457;transform:scaleX(1.0000);'>[Starting ID]</span>
<span class="t" style='left:647.10px;top:15.14px;font-size:14.6px;color:#222;-webkit-text-stroke:0.15px #222;transform:scaleX(1.0033);'>Start Here.yxmd</span>
<span class="t" style='left:800.85px;top:14.94px;font-size:14.6px;color:#000;-webkit-text-stroke:0.25px #000;transform:scaleX(1.0452);'>Dynamically</span>
<span class="t" style='left:889.69px;top:14.94px;font-size:14.6px;color:#000;-webkit-text-stroke:0.25px #000;transform:scaleX(1.0119);'>keep</span>
<span class="t" style='left:927.09px;top:14.94px;font-size:14.6px;color:#000;-webkit-text-stroke:0.25px #000;transform:scaleX(1.0130);'>records</span>
<span class="t" style='left:983.86px;top:14.94px;font-size:14.6px;color:#000;-webkit-text-stroke:0.25px #000;transform:scaleX(1.0439);'>beyond</span>
<span class="t" style='left:1039.37px;top:14.94px;font-size:14.6px;color:#000;-webkit-text-stroke:0.25px #000;transform:scaleX(1.0425);'>certain</span>
<span class="t" style='left:1090.86px;top:14.94px;font-size:14.6px;color:#000;-webkit-text-stroke:0.25px #000;transform:scaleX(1.0619);'>cell.yxmd</span>
<span class="t" style='left:777.43px;top:98.99px;font-size:16.2px;color:#0c0c0c;transform:scaleX(0.8884);'>18</span>
<span class="t" style='left:770.39px;top:114.19px;font-size:16.2px;color:#0c0c0c;transform:scaleX(0.8443);'>191b</span>
<span class="t" style='left:897.36px;top:98.99px;font-size:16.2px;color:#0c0c0c;transform:scaleX(0.8637);'>18</span>
<span class="t" style='left:889.20px;top:114.19px;font-size:16.2px;color:#0c0c0c;transform:scaleX(0.8692);'>281b</span>
<span class="t" style='left:1032.50px;top:143.79px;font-size:16.2px;color:#0c0c0c;transform:scaleX(0.7465);'>1</span>
<span class="t" style='left:1024.53px;top:158.99px;font-size:16.2px;color:#0c0c0c;transform:scaleX(0.8314);'>28b</span>
<span class="t" style='left:1152.36px;top:113.69px;font-size:16.2px;color:#0c0c0c;transform:scaleX(0.8637);'>18</span>
<span class="t" style='left:1144.48px;top:128.89px;font-size:16.2px;color:#0c0c0c;transform:scaleX(0.8671);'>371b</span>
<span class="t" style='left:1279.64px;top:98.99px;font-size:16.2px;color:#0c0c0c;transform:scaleX(0.8855);'>11</span>
<span class="t" style='left:1271.90px;top:114.19px;font-size:16.2px;color:#0c0c0c;transform:scaleX(0.8692);'>208b</span>
<span class="t" style='left:949.25px;top:208.86px;font-size:12.8px;color:#868686;font-weight:700;transform:scaleX(1.0733);'>[Sample] =</span>
<span class="t" style='left:949.18px;top:227.56px;font-size:12.8px;color:#868686;font-weight:700;transform:scaleX(1.0201);'>&quot;[HISTORY</span>
<span class="t" style='left:949.15px;top:246.26px;font-size:12.8px;color:#868686;font-weight:700;transform:scaleX(1.0657);'>DATA]&quot;</span>
<span class="t" style='left:1189.08px;top:164.06px;font-size:13.4px;color:#868686;font-weight:700;transform:scaleX(1.0290);'>[RecordID] &gt;</span>
<span class="t" style='left:1189.08px;top:182.76px;font-size:13.4px;color:#868686;font-weight:700;transform:scaleX(1.0318);'>[Starting ID]</span>
<span class="t" style='left:1010.51px;top:151.58px;font-size:9px;color:#3f5a38;font-weight:700;transform:scaleX(0.8704);'>T</span>
<span class="t" style='left:1010.28px;top:181.58px;font-size:9px;color:#3f5a38;font-weight:700;transform:scaleX(0.8696);'>F</span>
<span class="t" style='left:1072.10px;top:106.78px;font-size:9px;color:#3f5a38;font-weight:700;transform:scaleX(0.9630);'>T</span>
<span class="t" style='left:1072.11px;top:136.68px;font-size:9px;color:#3f5a38;font-weight:700;transform:scaleX(0.9636);'>S</span>
<span class="t" style='left:1251.09px;top:106.62px;font-size:12.5px;color:#4a5a24;font-weight:700;transform:scaleX(1.1467);'>T</span>
<span class="t" style='left:1249.77px;top:136.88px;font-size:9px;color:#3f5a38;font-weight:700;transform:scaleX(0.8913);'>F</span>
<span class="t" style='left:647.94px;top:296.80px;font-size:13px;color:#72758b;transform:scaleX(1.0554);'>Results - Filter (5) - Out - True</span>
<span class="t" style='left:695.52px;top:344.90px;font-size:15px;color:#1f1f1f;transform:scaleX(0.9627);'>3 of 3 Fields</span>
<span class="t" style='left:856.93px;top:344.90px;font-size:15px;color:#1f1f1f;transform:scaleX(0.9600);'>Cell Viewer</span>
<span class="t" style='left:961.82px;top:344.90px;font-size:15px;color:#1f1f1f;transform:scaleX(0.9811);'>11 records displayed</span>
<span class="t" style='left:1366.07px;top:343.80px;font-size:15px;color:#b3b3b3;transform:scaleX(1.0504);'>Search</span>
<span class="t" style='left:684.42px;top:384.97px;font-size:13.5px;color:#2b2b3a;font-weight:700;transform:scaleX(0.9829);'>Record</span>
<span class="t" style='left:772.10px;top:384.97px;font-size:13.5px;color:#2b2b3a;font-weight:700;transform:scaleX(1.0023);'>RecordID</span>
<span class="t" style='left:882.30px;top:384.97px;font-size:13.5px;color:#2b2b3a;font-weight:700;transform:scaleX(0.9870);'>Sample</span>
<span class="t" style='left:978.69px;top:384.97px;font-size:13.5px;color:#2b2b3a;font-weight:700;transform:scaleX(1.0252);'>Starting ID</span>
<span class="t" style='left:754.54px;top:407.77px;font-size:13.5px;color:#2e2e48;transform:scaleX(0.9650);'>1</span>
<span class="t" style='left:772.62px;top:409.27px;font-size:13.5px;color:#2e2e48;transform:scaleX(0.9650);'>8</span>
<span class="t" style='left:882.41px;top:409.27px;font-size:13.5px;color:#2e2e48;transform:scaleX(0.9650);'>sg</span>
<span class="t" style='left:978.42px;top:409.27px;font-size:13.5px;color:#2e2e48;transform:scaleX(0.9650);'>7</span>
<span class="t" style='left:754.54px;top:430.27px;font-size:13.5px;color:#2e2e48;transform:scaleX(0.9650);'>2</span>
<span class="t" style='left:772.52px;top:431.77px;font-size:13.5px;color:#2e2e48;transform:scaleX(0.9650);'>9</span>
<span class="t" style='left:882.22px;top:431.77px;font-size:13.5px;color:#2e2e48;transform:scaleX(0.9650);'>djg</span>
<span class="t" style='left:978.42px;top:431.77px;font-size:13.5px;color:#2e2e48;transform:scaleX(0.9650);'>7</span>
<span class="t" style='left:754.45px;top:452.77px;font-size:13.5px;color:#2e2e48;transform:scaleX(0.9650);'>3</span>
<span class="t" style='left:772.13px;top:454.27px;font-size:13.5px;color:#2e2e48;transform:scaleX(0.9650);'>10</span>
<span class="t" style='left:882.41px;top:454.27px;font-size:13.5px;color:#2e2e48;transform:scaleX(0.9650);'>sd</span>
<span class="t" style='left:978.42px;top:454.27px;font-size:13.5px;color:#2e2e48;transform:scaleX(0.9650);'>7</span>
<span class="t" style='left:754.25px;top:475.27px;font-size:13.5px;color:#2e2e48;transform:scaleX(0.9650);'>4</span>
<span class="t" style='left:772.13px;top:476.77px;font-size:13.5px;color:#2e2e48;transform:scaleX(0.9650);'>11</span>
<span class="t" style='left:882.22px;top:476.77px;font-size:13.5px;color:#2e2e48;transform:scaleX(0.9650);'>erew</span>
<span class="t" style='left:978.42px;top:476.77px;font-size:13.5px;color:#2e2e48;transform:scaleX(0.9650);'>7</span>
<span class="t" style='left:754.45px;top:497.77px;font-size:13.5px;color:#2e2e48;transform:scaleX(0.9650);'>5</span>
<span class="t" style='left:772.13px;top:499.27px;font-size:13.5px;color:#2e2e48;transform:scaleX(0.9650);'>12</span>
<span class="t" style='left:882.51px;top:499.27px;font-size:13.5px;color:#2e2e48;transform:scaleX(0.9650);'>ty</span>
<span class="t" style='left:978.42px;top:499.27px;font-size:13.5px;color:#2e2e48;transform:scaleX(0.9650);'>7</span>
<span class="t" style='left:754.45px;top:520.27px;font-size:13.5px;color:#2e2e48;transform:scaleX(0.9650);'>6</span>
<span class="t" style='left:772.13px;top:521.77px;font-size:13.5px;color:#2e2e48;transform:scaleX(0.9650);'>13</span>
<span class="t" style='left:882.22px;top:521.77px;font-size:13.5px;color:#2e2e48;transform:scaleX(0.9650);'>er</span>
<span class="t" style='left:978.42px;top:521.77px;font-size:13.5px;color:#2e2e48;transform:scaleX(0.9650);'>7</span>
<span class="t" style='left:754.54px;top:542.77px;font-size:13.5px;color:#2e2e48;transform:scaleX(0.9650);'>7</span>
<span class="t" style='left:772.13px;top:544.27px;font-size:13.5px;color:#2e2e48;transform:scaleX(0.9650);'>14</span>
<span class="t" style='left:882.51px;top:544.27px;font-size:13.5px;color:#2e2e48;transform:scaleX(0.9650);'>t</span>
<span class="t" style='left:978.42px;top:544.27px;font-size:13.5px;color:#2e2e48;transform:scaleX(0.9650);'>7</span>
<span class="t" style='left:754.45px;top:565.27px;font-size:13.5px;color:#2e2e48;transform:scaleX(0.9650);'>8</span>
<span class="t" style='left:772.13px;top:566.77px;font-size:13.5px;color:#2e2e48;transform:scaleX(0.9650);'>15</span>
<span class="t" style='left:883.09px;top:566.77px;font-size:13.5px;color:#2e2e48;transform:scaleX(0.9650);'>j</span>
<span class="t" style='left:978.42px;top:566.77px;font-size:13.5px;color:#2e2e48;transform:scaleX(0.9650);'>7</span>
<span class="t" style='left:754.54px;top:587.77px;font-size:13.5px;color:#2e2e48;transform:scaleX(0.9650);'>9</span>
<span class="t" style='left:772.13px;top:589.27px;font-size:13.5px;color:#2e2e48;transform:scaleX(0.9650);'>16</span>
<span class="t" style='left:882.22px;top:589.27px;font-size:13.5px;color:#2e2e48;transform:scaleX(0.9650);'>gfn</span>
<span class="t" style='left:978.42px;top:589.27px;font-size:13.5px;color:#2e2e48;transform:scaleX(0.9650);'>7</span>
<span class="t" style='left:747.20px;top:610.27px;font-size:13.5px;color:#2e2e48;transform:scaleX(0.9650);'>10</span>
<span class="t" style='left:772.13px;top:611.77px;font-size:13.5px;color:#2e2e48;transform:scaleX(0.9650);'>17</span>
<span class="t" style='left:881.93px;top:611.77px;font-size:13.5px;color:#2e2e48;transform:scaleX(0.9650);'>bsfd</span>
<span class="t" style='left:978.42px;top:611.77px;font-size:13.5px;color:#2e2e48;transform:scaleX(0.9650);'>7</span>
<span class="t" style='left:748.26px;top:632.77px;font-size:13.5px;color:#2e2e48;transform:scaleX(0.9650);'>11</span>
<span class="t" style='left:772.13px;top:634.27px;font-size:13.5px;color:#2e2e48;transform:scaleX(0.9650);'>18</span>
<span class="t" style='left:882.22px;top:634.27px;font-size:13.5px;color:#2e2e48;transform:scaleX(0.9650);'>a</span>
<span class="t" style='left:978.42px;top:634.27px;font-size:13.5px;color:#2e2e48;transform:scaleX(0.9650);'>7</span>
</div>
</body></html>
